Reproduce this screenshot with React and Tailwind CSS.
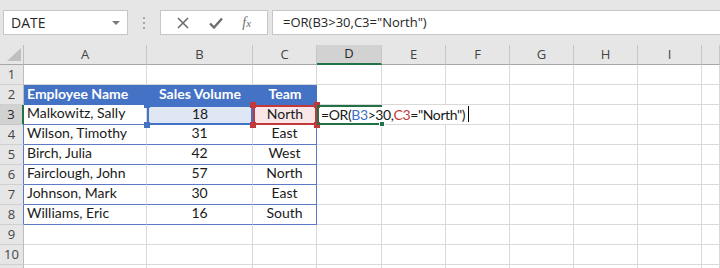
import React from 'react';

const font = { fontFamily: 'Lato, "Liberation Sans", sans-serif' };

const employees = [
  { name: 'Malkowitz, Sally', sales: 18, team: 'North' },
  { name: 'Wilson, Timothy', sales: 31, team: 'East' },
  { name: 'Birch, Julia', sales: 42, team: 'West' },
  { name: 'Fairclough, John', sales: 57, team: 'North' },
  { name: 'Johnson, Mark', sales: 30, team: 'East' },
  { name: 'Williams, Eric', sales: 16, team: 'South' },
];

const letters = ['A', 'B', 'C', 'D', 'E', 'F', 'G', 'H', 'I', ''];

// corner handle squares for the reference highlights
const Handles = ({ color }) => (
  <>
    <span className={`absolute -left-[3px] -top-[3px] h-[6px] w-[6px] ${color}`} />
    <span className={`absolute -right-[3px] -top-[3px] h-[6px] w-[6px] ${color}`} />
    <span className={`absolute -left-[3px] -bottom-[3px] h-[6px] w-[6px] ${color}`} />
    <span className={`absolute -right-[3px] -bottom-[3px] h-[6px] w-[6px] ${color}`} />
  </>
);

const RowHead = ({ n, active, blue }) => (
  <div
    className={`flex items-center justify-center border-b border-r text-[13px] ${
      active
        ? 'bg-[#d2d2d2] border-r-2 border-r-[#217346] border-b-[#c6c6c6] text-[#262626]'
        : blue
        ? 'bg-[#e6e6e6] border-r-[#5b7bc8] border-b-[#d0d0d0] text-[#444]'
        : 'bg-[#e6e6e6] border-r-[#bdbdbd] border-b-[#d0d0d0] text-[#444]'
    }`}
    style={{ fontFamily: '"Open Sans", sans-serif' }}
  >
    {n}
  </div>
);

const Empty = ({ className = '' }) => (
  <div className={`border-b border-r border-[#d9d9d9] ${className}`} />
);

const Formula = () => (
  <div className="relative z-10 flex items-end whitespace-nowrap pb-[1px] pl-[2px] text-[14px] leading-none tracking-[-0.4px] text-[#1a1a1a]">
    <span>=OR(</span>
    <span className="text-[#3c6ec6]">B3</span>
    <span>&gt;30,</span>
    <span className="text-[#c2383b]">C3</span>
    <span>="North")</span>
    <span className="ml-[3px] h-[16px] w-px bg-black" />
  </div>
);

export default function App() {
  return (
    <div className="h-[268px] w-[720px] overflow-hidden bg-white" style={font}>
      {/* formula bar */}
      <div className="flex h-[45px] items-center bg-[#e6e6e6] pl-[3px]">
        <div className="flex h-[25px] w-[125px] items-center justify-between border border-[#c6c6c6] bg-white pl-[7px] pr-[7px]">
          <span className="text-[14px] text-[#262626]" style={{ fontFamily: '"Open Sans", sans-serif' }}>
            DATE
          </span>
          <span className="h-0 w-0 border-x-[4px] border-t-[4px] border-x-transparent border-t-[#7a7a7a]" />
        </div>
        <div className="flex w-[32px] flex-col items-center gap-[3px]">
          <span className="h-[2px] w-[2px] bg-[#a6a6a6]" />
          <span className="h-[2px] w-[2px] bg-[#a6a6a6]" />
          <span className="h-[2px] w-[2px] bg-[#a6a6a6]" />
        </div>
        <div className="flex h-[25px] w-[108px] items-center justify-around border border-[#c6c6c6] bg-white px-[6px]">
          <svg width="12" height="12" viewBox="0 0 12 12">
            <path d="M1 1L11 11M11 1L1 11" stroke="#6e6e6e" strokeWidth="1.6" />
          </svg>
          <svg width="14" height="12" viewBox="0 0 14 12">
            <path d="M1 6.5L5 10.5L13 1.5" stroke="#6e6e6e" strokeWidth="2.4" fill="none" />
          </svg>
          <span
            className="text-[14px] italic text-[#6e6e6e]"
            style={{ fontFamily: '"Liberation Serif", serif' }}
          >
            f<span className="text-[11px]">x</span>
          </span>
        </div>
        <div
          className="ml-[4px] flex h-[25px] flex-1 items-center border border-r-0 border-[#c6c6c6] bg-white pl-[10px] text-[13px] text-[#262626]"
          style={{ fontFamily: '"Open Sans", sans-serif' }}
        >
          =OR(B3&gt;30,C3="North")
        </div>
      </div>

      {/* sheet */}
      <div
        className="grid auto-rows-[20px] grid-cols-[24px_123px_106px_64px_65px_64px_64px_64px_64px_64px_1fr] text-[14px] text-[#1a1a1a]"
      >
        {/* column headers */}
        <div className="relative border-b border-r border-b-[#a6a6a6] border-r-[#bdbdbd] bg-[#e6e6e6]">
          <span className="absolute bottom-[3px] right-[2px] h-0 w-0 border-b-[13px] border-l-[14px] border-b-[#bfbfbf] border-l-transparent" />
        </div>
        {letters.map((l) =>
          l === 'D' ? (
            <div
              key={l}
              className="flex items-center justify-center border-b-2 border-r border-b-[#217346] border-r-[#c6c6c6] bg-[#d2d2d2] text-[13px] text-[#262626]"
              style={{ fontFamily: '"Open Sans", sans-serif' }}
            >
              {l}
            </div>
          ) : (
            <div
              key={l || 'J'}
              className="flex items-center justify-center border-b border-r border-b-[#a6a6a6] border-r-[#c6c6c6] bg-[#e6e6e6] text-[13px] text-[#444]"
              style={{ fontFamily: '"Open Sans", sans-serif' }}
            >
              {l}
            </div>
          )
        )}

        {/* row 1 */}
        <RowHead n={1} />
        {letters.map((l) => (
          <Empty key={'r1' + l} />
        ))}

        {/* row 2 - table header */}
        <RowHead n={2} />
        <div className="flex items-end bg-[#4472c4] pb-[1px] pl-[3px] font-bold text-white">Employee Name</div>
        <div className="flex items-end justify-center bg-[#4472c4] pb-[1px] font-bold text-white">Sales Volume</div>
        <div className="flex items-end justify-center bg-[#4472c4] pb-[1px] font-bold text-white">Team</div>
        {letters.slice(3).map((l) => (
          <Empty key={'r2' + l} />
        ))}

        {/* rows 3-8 */}
        {employees.map((emp, i) => {
          const active = i === 0;
          return (
            <React.Fragment key={emp.name}>
              <RowHead n={i + 3} active={active} blue />
              <div className="flex items-end border-b border-r border-b-[#5b7bc8] border-r-[#d9d9d9] pb-[1px] pl-[3px]">
                {emp.name}
              </div>
              {active ? (
                <div className="relative flex items-end justify-center bg-[#dfe7f5] pb-[1px]">
                  <span className="absolute inset-0 border-2 border-[#4472c4]" />
                  <Handles color="bg-[#4472c4]" />
                  <span className="relative">{emp.sales}</span>
                </div>
              ) : (
                <div className="flex items-end justify-center border-b border-r border-b-[#5b7bc8] border-r-[#d9d9d9] pb-[1px]">
                  {emp.sales}
                </div>
              )}
              {active ? (
                <div className="relative flex items-end justify-center bg-[#f9e6e6] pb-[1px]">
                  <span className="absolute inset-0 border-2 border-[#c2383b]" />
                  <Handles color="bg-[#c2383b]" />
                  <span className="relative">{emp.team}</span>
                </div>
              ) : (
                <div className="flex items-end justify-center border-b border-r border-[#5b7bc8] pb-[1px]">
                  {emp.team}
                </div>
              )}
              {active ? (
                <>
                  <div className="relative flex items-end border-y-2 border-l-2 border-[#217346]">
                    <Formula />
                    <span className="absolute -bottom-[4px] -right-[3px] h-[6px] w-[6px] border border-white bg-[#217346]" />
                  </div>
                  <Empty className="border-r-0" />
                  {letters.slice(5).map((l) => (
                    <Empty key={'r3' + l} />
                  ))}
                </>
              ) : (
                letters.slice(3).map((l) => <Empty key={`r${i + 3}${l}`} />)
              )}
            </React.Fragment>
          );
        })}

        {/* rows 9-11 (11 is only a sliver at the bottom edge) */}
        {[9, 10, null].map((n, k) => (
          <React.Fragment key={k}>
            <RowHead n={n} />
            {letters.map((l) => (
              <Empty key={`r${k}${l}`} />
            ))}
          </React.Fragment>
        ))}
      </div>
    </div>
  );
}
